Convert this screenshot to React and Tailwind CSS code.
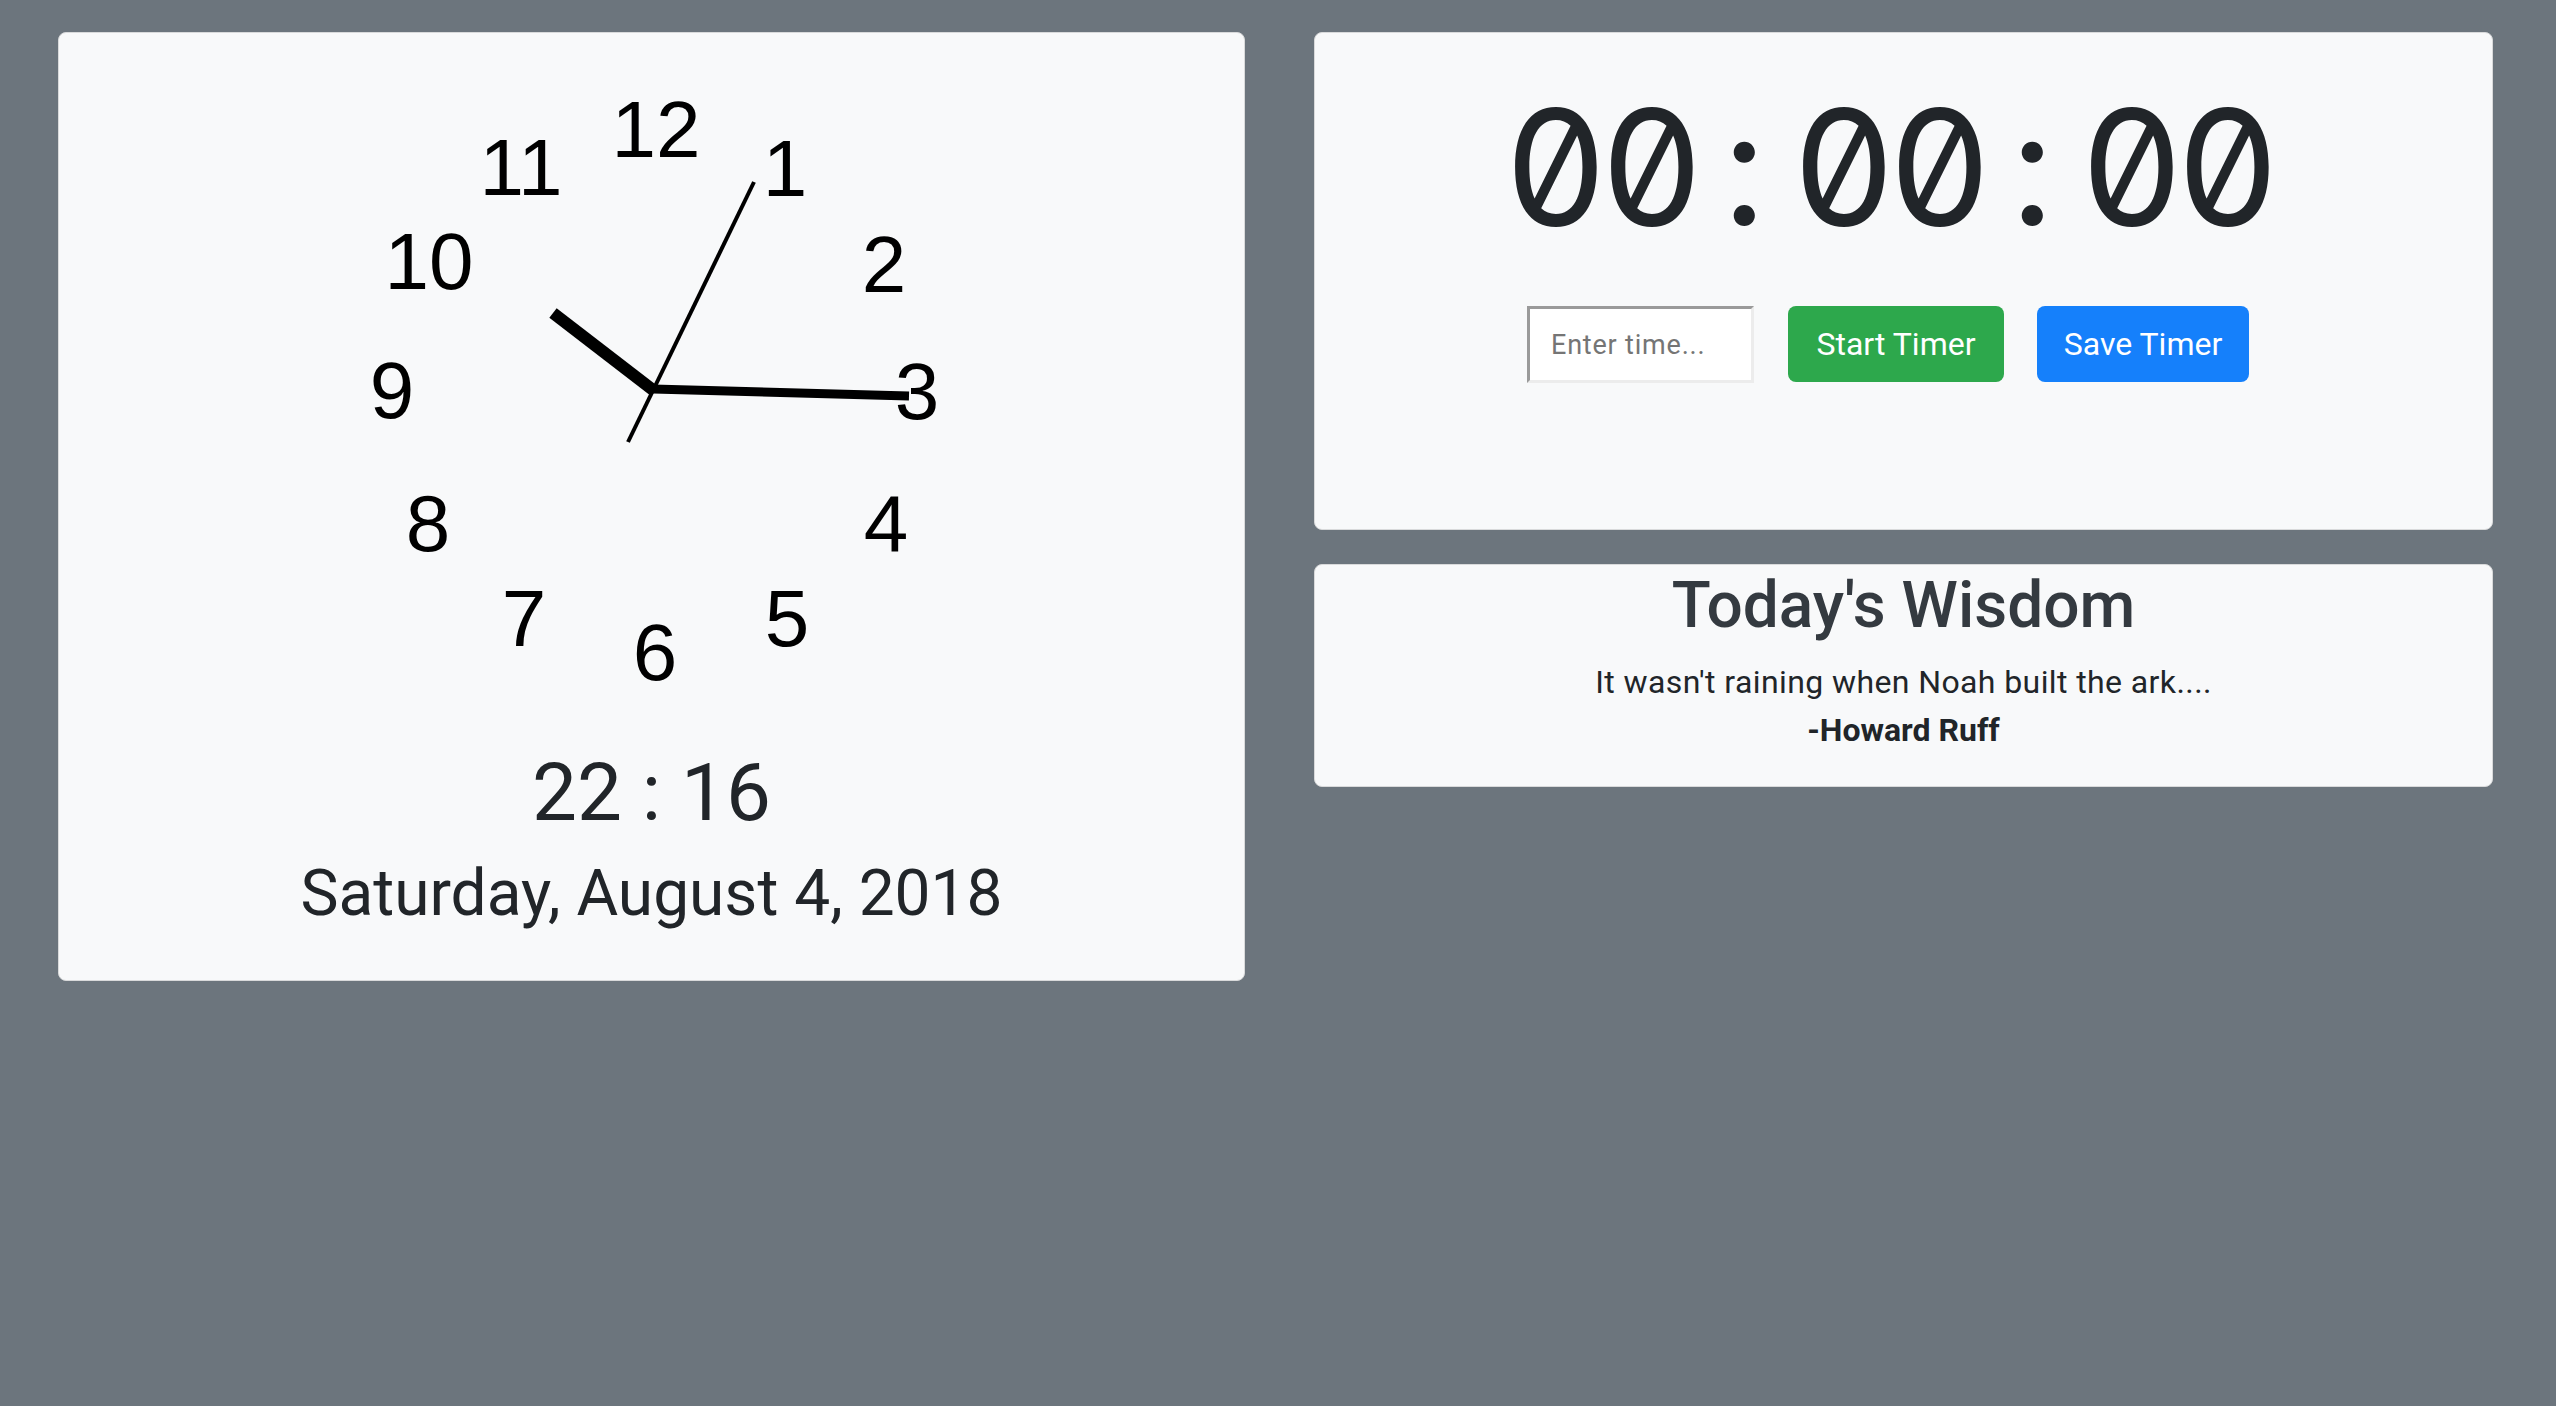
import React from 'react';

const NUMS = [
    { n: '12', x: 1, y: -262 },
    { n: '1', x: 130, y: -223 },
    { n: '2', x: 229, y: -127 },
    { n: '3', x: 262, y: 0 },
    { n: '4', x: 231, y: 132 },
    { n: '5', x: 132, y: 227 },
    { n: '6', x: 0, y: 261 },
    { n: '7', x: -131, y: 227 },
    { n: '8', x: -227, y: 132 },
    { n: '9', x: -263, y: -1 },
    { n: '10', x: -226, y: -130 },
    { n: '11', x: -134, y: -224 },
];

function AnalogClock() {
    const cx = 303;
    const cy = 300;
    return (
        <svg width="600" height="600" viewBox="0 0 600 600" className="block overflow-visible">
            {NUMS.map((d) => (
                <text
                    key={d.n}
                    x={cx + d.x}
                    y={cy + d.y + 28.6}
                    textAnchor="middle"
                    fontSize="80"
                    fontFamily="'Liberation Sans', Arial, sans-serif"
                    fill="#000"
                >
                    {d.n}
                </text>
            ))}
            {/* hour */}
            <line x1={cx - 2} y1={cy} x2={cx - 102} y2={cy - 77} stroke="#000" strokeWidth="12" />
            {/* minute */}
            <line x1={cx - 2} y1={cy - 1} x2={cx + 254} y2={cy + 6} stroke="#000" strokeWidth="9" />
            {/* second */}
            <line x1={cx - 27} y1={cy + 52} x2={cx + 99} y2={cy - 208} stroke="#000" strokeWidth="4" />
        </svg>
    );
}

export default function App() {
    const timer = '00:00:00'.split('');
    return (
        <div className="min-h-screen bg-[#6c757d] font-['Roboto','Liberation_Sans',sans-serif] text-[#212529]">
            <div className="grid grid-cols-[1187px_1179px] gap-x-[69px] pl-[58px] pt-[32px] items-start">
                {/* Clock */}
                <div className="h-[949px] bg-[#f8f9fa] border border-[#d9dadb] rounded-[8px] flex flex-col items-center pt-[57px]">
                    <AnalogClock />
                    <h1 className="mt-[55px] text-[80px] leading-[96px] font-normal">22 : 16</h1>
                    <h2 className="mt-[15px] text-[64px] leading-[76.8px] font-normal">Saturday, August 4, 2018</h2>
                </div>

                <div className="flex flex-col gap-[34px]">
                    {/* Timer */}
                    <div className="h-[498px] bg-[#f8f9fa] border border-[#d9dadb] rounded-[8px] pt-[38px] pl-[40px] pr-[71px]">
                        <div className="flex justify-center font-['Inter','DejaVu_Sans_Mono',monospace] text-[160px] leading-[192px] slashed-zero tabular-nums">
                            {timer.map((c, i) => (
                                <span key={i} className="w-[96px] text-center">{c}</span>
                            ))}
                        </div>
                        <div className="mt-[43px] flex justify-center items-start">
                            <input
                                type="text"
                                placeholder="Enter time..."
                                className="w-[227px] h-[77px] bg-white border-[3px] border-t-[#9a9a9a] border-l-[#9a9a9a] border-b-[#ececec] border-r-[#ececec] pl-[21px] text-[27px] tracking-[0.8px] placeholder:text-[#757575] outline-none"
                            />
                            <button className="ml-[34px] w-[216px] h-[76px] rounded-[8px] bg-[#2da84c] text-white text-[32px]">
                                Start Timer
                            </button>
                            <button className="ml-[33px] w-[212px] h-[76px] rounded-[8px] bg-[#1580fb] text-white text-[32px]">
                                Save Timer
                            </button>
                        </div>
                    </div>

                    {/* Wisdom */}
                    <div className="h-[223px] bg-[#f8f9fa] border border-[#d9dadb] rounded-[8px] pt-[3px] text-center">
                        <h2 className="text-[64px] leading-[76.8px] text-[#343a40] font-medium">Today's Wisdom</h2>
                        <p className="mt-[13px] text-[32px] leading-[48px] tracking-[0.4px]">It wasn't raining when Noah built the ark....</p>
                        <p className="text-[32px] leading-[48px] font-bold">-Howard Ruff</p>
                    </div>
                </div>
            </div>
        </div>
    );
}
